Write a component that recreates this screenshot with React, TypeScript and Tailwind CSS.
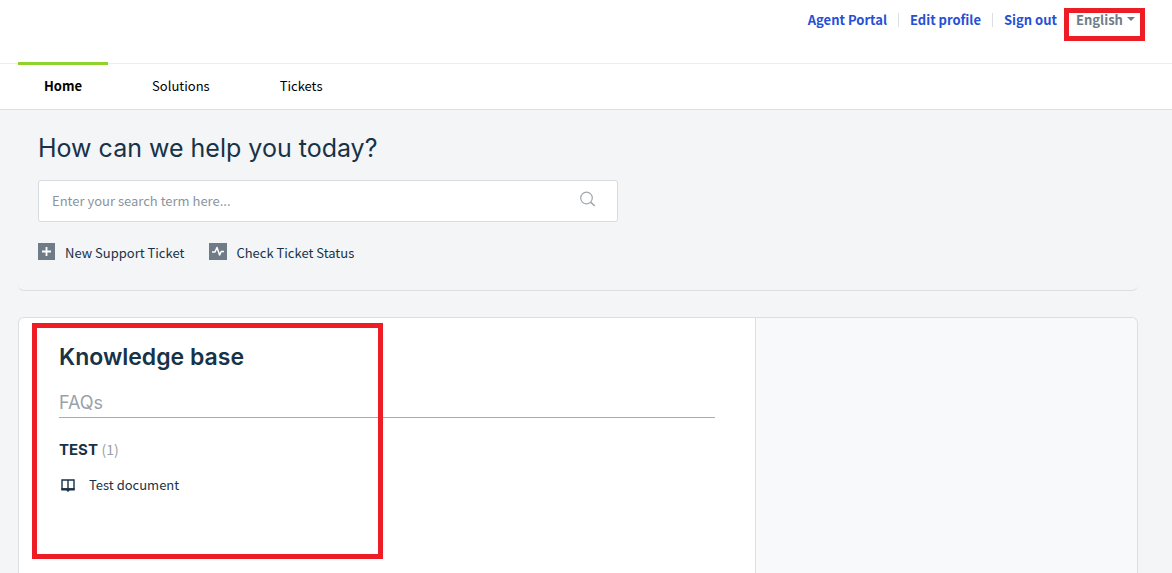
import React from "react";

const body = "font-['Noto_Sans_CJK_SC','Noto_Sans',sans-serif]";
const display = "font-['Inter',sans-serif]";

function SearchIcon() {
  return (
    <svg width="17" height="17" viewBox="0 0 17 17" fill="none" stroke="#a2a7ad" strokeWidth="1.2" aria-hidden="true">
      <circle cx="7.5" cy="7" r="5.8" />
      <path d="M11.6 11.2 15.8 15" strokeWidth="1.6" />
    </svg>
  );
}

function PlusIcon() {
  return (
    <svg width="17" height="17" viewBox="0 0 17 17" aria-hidden="true">
      <rect width="17" height="17" fill="#6f7c87" />
      <path d="M8.5 4v9M4 8.5h9" stroke="#fff" strokeWidth="1.8" />
    </svg>
  );
}

function PulseIcon() {
  return (
    <svg width="18" height="17" viewBox="0 0 18 17" aria-hidden="true">
      <rect width="18" height="17" fill="#6f7c87" />
      <path d="M3 9h3l2-4.5 2.6 7.5 1.6-3.5H15" fill="none" stroke="#fff" strokeWidth="1.5" strokeLinejoin="round" />
    </svg>
  );
}

function BookIcon() {
  return (
    <svg width="14" height="13" viewBox="0 0 14 13" aria-hidden="true">
      <path d="M1 1h12v9H1z M7 1v9" fill="none" stroke="#183247" strokeWidth="1.4" />
      <path d="M.3 9.2h13.4v2.3H8.6L7 12.9 5.4 11.5H.3z" fill="#183247" />
    </svg>
  );
}

const tabs = ["Home", "Solutions", "Tickets"];

export default function App() {
  return (
    <div className={`flex h-screen flex-col overflow-hidden bg-[#f3f5f7] text-[13px] leading-5 text-[#183247] ${body}`}>
      <header className="flex h-16 shrink-0 justify-end border-b border-[#ebeef0] bg-white pr-[27px] pt-2">
        <div className="flex h-[23px] items-center font-bold text-[#264fd6]">
          <a href="#agent">Agent Portal</a>
          <span className="mx-[11px] h-3.5 w-px bg-[#dcdfe2]" />
          <a href="#profile">Edit profile</a>
          <span className="mx-[11px] h-3.5 w-px bg-[#dcdfe2]" />
          <a href="#signout">Sign out</a>
        </div>
        <div className="relative ml-[7px] flex h-[33px] w-[81px] items-start border-5 border-[#ee1c25] text-[#6f7c87]">
          <select
            aria-label="Language"
            className="-mt-[3px] h-5 w-full appearance-none bg-transparent pl-[7px] font-bold leading-5 outline-none"
          >
            <option>English</option>
          </select>
          <svg className="pointer-events-none absolute right-[5px] top-1" width="8" height="4" viewBox="0 0 8 4" aria-hidden="true">
            <path d="M0 0h8L4 4z" fill="#6f7c87" />
          </svg>
        </div>
      </header>

      <nav className="h-[46px] shrink-0 border-b border-[#dadfe3] bg-white pl-[18px] text-black">
        <div className="-mt-0.5 flex gap-[18px]">
          {tabs.map((tab, i) => (
            <a
              key={tab}
              href={`#${tab.toLowerCase()}`}
              className={`border-t-3 px-[26px] pt-[11px] ${i === 0 ? "border-[#8ed22b] font-bold" : "border-transparent"}`}
            >
              {tab}
            </a>
          ))}
        </div>
      </nav>

      <main className="flex grow flex-col pl-[18px] pr-[34px]">
        <section className="h-[181px] shrink-0 rounded-b-md border-b border-[#dadfe3] px-5 pt-5">
          <h1 className={`text-[25px] leading-9 ${display}`}>How can we help you today?</h1>
          <form className="mt-3.5 flex h-[42px] max-w-[580px] items-center rounded-[3px] border border-[#d5dce2] bg-white pl-[13px] pr-[21px]">
            <input
              type="text"
              aria-label="Search"
              placeholder="Enter your search term here..."
              className="min-w-0 grow outline-none placeholder:text-[#8a949e]"
            />
            <button type="button" aria-label="Submit search" className="pb-1">
              <SearchIcon />
            </button>
          </form>
          <div className="mt-[21px] flex gap-[25px]">
            <a href="#new" className="flex gap-2.5">
              <PlusIcon />
              New Support Ticket
            </a>
            <a href="#status" className="flex gap-[9px]">
              <PulseIcon />
              Check Ticket Status
            </a>
          </div>
        </section>

        <div className="mt-[26px] flex grow rounded-t-md border border-b-0 border-[#dadfe3] bg-white">
          <section className="relative grow px-10 pt-6">
            <h2 className={`text-[23px] font-semibold leading-[30px] ${display}`}>Knowledge base</h2>
            <h3 className={`mt-4 border-b border-[#8ed22b] text-[18px] leading-[29px] text-[#9aa1a6] ${display}`}>FAQs</h3>
            <h4 className={`mt-[21px] text-[15px] font-bold ${display}`}>
              TEST <span className={`text-[14px] font-normal text-[#9aa1a6] ${body}`}>(1)</span>
            </h4>
            <ul className="mt-[15px]">
              <li>
                <a href="#test-document" className="flex items-center gap-3.5 pl-0.5">
                  <BookIcon />
                  Test document
                </a>
              </li>
            </ul>
            <div className="pointer-events-none absolute left-[13px] top-[5px] h-[236px] w-[351px] border-5 border-[#ee1c25]" />
          </section>
          <aside className="w-[34.2%] rounded-tr-md border-l border-[#dadfe3] bg-[#f8f9fb]" />
        </div>
      </main>
    </div>
  );
}
